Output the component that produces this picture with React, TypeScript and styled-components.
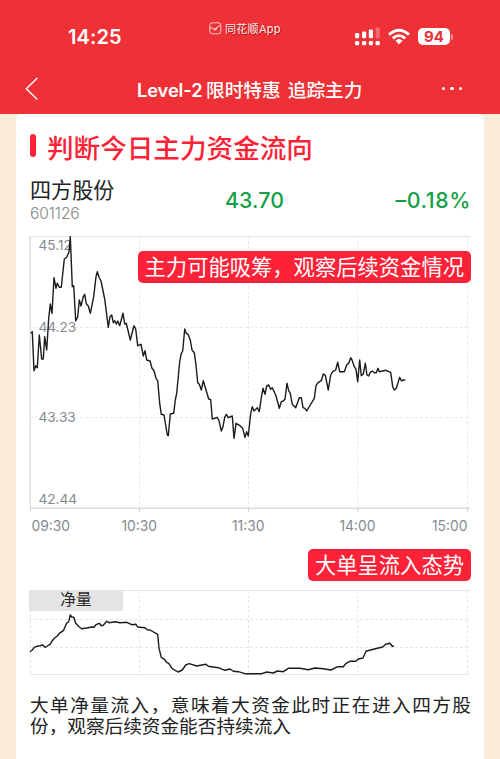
import React from "react";
import styled, { createGlobalStyle } from "styled-components";

const cjk = '"Noto Sans CJK SC", sans-serif';

const GlobalStyle = createGlobalStyle`
  * { box-sizing: border-box; }
  body { margin: 0; background: #fdecdc; font-family: Inter, ${cjk}; }
`;

const Page = styled.div`
  width: 500px;
  height: 759px;
  overflow: hidden;
  display: flex;
  flex-direction: column;
  background: #fdecdc;
`;

const Header = styled.header`
  height: 114px;
  flex: none;
  background: #ee3136;
  color: #fff;
`;

const StatusBar = styled.div`
  height: 63px;
  display: grid;
  grid-template-columns: 209px 1fr 146px;
`;

const Clock = styled.div`
  padding: 25px 0 0 68px;
  font-size: 20px;
  line-height: 25px;
  font-weight: 600;
  letter-spacing: 0.1px;
`;

const Brand = styled.div`
  display: flex;
  gap: 3px;
  padding-top: 21px;
  font-size: 11px;
  line-height: 17px;
  white-space: nowrap;
  color: #ffeceb;
  text-shadow: 1px 1px 1px rgba(110, 0, 0, 0.55);
  svg { margin-top: 1px; flex: none; }
  span { letter-spacing: 0.3px; }
`;

const StatusIcons = styled.div`
  display: flex;
  padding-top: 27px;
`;

const Nav = styled.div`
  height: 51px;
  display: grid;
  grid-template-columns: 137px 1fr 70px;
`;

const Back = styled.div`
  padding: 14px 0 0 25px;
`;

const NavTitle = styled.h1`
  margin: 0;
  padding-top: 13px;
  display: flex;
  align-items: baseline;
  white-space: nowrap;
  font-size: 18.7px;
  line-height: 26px;
  font-weight: 500;
`;

const Latin = styled.span`
  width: 69px;
  font-size: 18.3px;
  font-weight: 600;
  letter-spacing: -0.1px;
`;

const Phrase = styled.span`
  font-family: ${cjk};
  margin-right: 7px;
`;

const More = styled.div`
  display: flex;
  gap: 5px;
  padding: 24px 0 0 12px;
`;

const Dot = styled.i`
  width: 3.4px;
  height: 3.4px;
  border-radius: 50%;
  background: #fff;
`;

const Card = styled.main`
  width: 468px;
  height: 645px;
  margin: 0 auto;
  padding: 0 13px 0 14px;
  background: #fff;
  border-radius: 6px 6px 0 0;
`;

const Heading = styled.div`
  height: 60px;
  display: flex;
  gap: 11px;
  padding-top: 13px;
`;

const Marker = styled.i`
  width: 6px;
  height: 23px;
  margin-top: 7px;
  border-radius: 3px;
  background: #fc2337;
`;

const HeadingText = styled.h2`
  margin: 0;
  font-family: ${cjk};
  font-size: 26.6px;
  line-height: 39px;
  font-weight: 500;
  color: #fc2337;
  white-space: nowrap;
`;

const Quote = styled.section`
  height: 58px;
  display: grid;
  grid-template-columns: 195px 1fr auto;
  color: #14a046;
`;

const StockName = styled.div`
  font-family: ${cjk};
  font-size: 21.1px;
  line-height: 30px;
  color: #222;
`;

const StockCode = styled.div`
  font-size: 15.6px;
  line-height: 20px;
  font-weight: 300;
  letter-spacing: -0.1px;
  color: #888;
`;

const Figure = styled.div<{ $tracking: number }>`
  padding-top: 13px;
  font-size: 21.3px;
  line-height: 27px;
  font-weight: 500;
  letter-spacing: ${(p) => p.$tracking}px;
`;

const ChartBox = styled.section<{ $height: number }>`
  position: relative;
  height: ${(p) => p.$height}px;
  margin: 0 -10px;
  svg { display: block; }
`;

const Callout = styled.div<{ $floating?: boolean }>`
  ${(p) => (p.$floating ? "position: absolute; right: 10px; top: 19px;" : "")}
  width: fit-content;
  height: 32px;
  margin-left: auto;
  padding: 0 7px;
  border-radius: 5px;
  background: #fd2237;
  color: #fff;
  font-family: ${cjk};
  font-size: 21.3px;
  line-height: 29px;
  font-weight: 400;
  white-space: nowrap;
`;

const CalloutRow = styled.div`
  height: 35px;
  padding-top: 1px;
`;

const NetLabel = styled.div`
  position: absolute;
  left: 9px;
  top: 7px;
  width: 94px;
  height: 21px;
  background: #e4e4e4;
  color: #2b2b2b;
  font-family: ${cjk};
  font-size: 15.7px;
  line-height: 18px;
  text-align: center;
`;

const Note = styled.p`
  margin: 0;
  width: 441px;
  font-family: ${cjk};
  font-size: 18.65px;
  line-height: 20.5px;
  text-align: justify;
  color: #222;
`;

type Point = [number, number];

// Traces are stored in thirds of a pixel, relative to the corner of their chart.
const parse = (s: string, dx = 0, dy = 0): Point[] =>
  s.split(" ").map((pair) => {
    const [x, y] = pair.split(",").map(Number);
    return [(x + dx) / 3, (y + dy) / 3];
  });

const price: Point[] = [
  ...parse("32,325 37,320 42,437 47,422 52,428 58,330 65,402 70,402 74,335 80,375 86,280 91,237 96,265 102,158 108,190 112,175 118,187 124,187 133,102 140,97 147,80 151,35 157,185 161,182 167,288 173,275 178,225 183,243 190,215 194,208 199,236 205,243 211,265 221,215 228,155 232,140 238,158 243,168 254,222 265,307 270,275 275,270 280,293 284,287 289,297 293,288 299,302 309,265 314,297 319,295 331,345"),
  ...parse("12,302 17,312 23,362 33,358 40,393 45,377 50,405 60,408 66,430 72,437 78,460 83,467 89,535 94,568 102,570 112,630 115,632 121,567 131,565 136,525 140,505 149,410 154,385 158,378 164,312 169,325 174,328 181,345 186,375 193,383 198,420 203,473 208,478 214,495 220,467 236,522 242,524 247,582 262,577 267,587 274,618 279,605 284,577 289,568 295,578", 330),
  ...parse("7,228 12,295 18,250 30,257 38,265 45,292 50,275 55,288 62,220 67,200 72,213 82,203 88,215 94,173 99,145 105,163 110,138 116,135 122,148 127,143 138,167 148,205 154,185 160,183 165,177 171,130 176,152 181,160 187,193 197,203 208,173 214,173 219,203 225,205 230,213 247,185 253,175 258,137 264,128 274,122 280,102 286,106 295,150 302,105 308,95 317,90 323,67 329,95 343,95 351,73 356,70 362,53 367,62 373,80 378,88 383,125 389,60 394,107 400,102 406,70 411,105 416,108 421,97 427,93 433,98 439,98 444,85 448,95 468,91 482,97 488,140 493,150 499,145 509,112 514,122 526,119", 630, 345),
];

const net: Point[] = [
  ...parse("30,215 37,210 43,202 50,199 60,197 68,195 75,202 82,198 90,193 97,182 103,175 112,168 118,160 130,152 140,130 146,125 151,105 155,111 161,112 167,130 177,140 185,146 200,144 215,141 222,142 228,134 238,130 244,137 250,136 260,124 268,128 285,125 300,128 320,127 335,134 348,133 353,141 375,143 382,149 390,150 413,163 417,205 424,232 433,238 440,247 446,250 457,266 474,276 487,270 497,255 508,251 530,258", 0, -9),
  ...parse("18,253 25,259 55,263 75,271 90,267 100,274 115,275 135,281 185,281 200,276 220,279 232,273 250,275 265,265 300,265 325,269 345,264 370,266 393,270 413,260 430,260 437,251 450,244 467,244 475,237 489,234 498,214 520,208 548,201 557,193 570,190 577,199 582,199", 540, -9),
];

const columns = [10.5, 119.5, 228.5, 338, 447.5];

const Trace = ({ points }: { points: Point[] }) => (
  <polyline
    points={points.map((p) => p.map((n) => n.toFixed(1)).join(",")).join(" ")}
    fill="none"
    stroke="#1b1b1b"
    strokeWidth="1.4"
    strokeLinejoin="round"
  />
);

const PriceChart = () => (
  <svg width="461" height="316" fontFamily="Inter" fontSize="13.6" fill="#848991">
    <g transform="translate(0 -14)">
      <g stroke="#e9e9ea" strokeDasharray="3 2">
        {columns.slice(1).map((x) => <path key={x} d={`M${x} 18V290`} />)}
        <path d="M10 109.5H449M10 199.5H449" />
      </g>
      <path d="M10 18.5H450" stroke="#e4e4e5" />
      <path d="M10.3 18V290" stroke="#dededf" strokeWidth="1.5" />
      <path d="M10 290.2H450" stroke="#dcdcdd" strokeWidth="1.4" />
      {columns.map((x) => <path key={x} d={`M${x} 290V294`} stroke="#d4d4d6" />)}
      <g>
        <text x="18.5" y="32">45.12</text>
        <text x="18.5" y="114">44.23</text>
        <text x="18.5" y="204">43.33</text>
        <text x="18.5" y="286">42.44</text>
      </g>
      <g fontSize="13.8">
        <text x="11.5" y="312.5">09:30</text>
        <text x="101.5" y="312.5">10:30</text>
        <text x="212" y="312.5">11:30</text>
        <text x="319.5" y="312.5">14:00</text>
        <text x="412" y="312.5">15:00</text>
      </g>
    </g>
    <g transform="translate(0 -7)"><Trace points={price} /></g>
  </svg>
);

const NetChart = () => (
  <svg width="461" height="104">
    <g stroke="#e6e6e6" strokeDasharray="3 2">
      {columns.map((x) => <path key={x} d={`M${x} 7V91`} />)}
      <path d="M10 36.5H449M10 64.5H449" />
    </g>
    <path d="M10 7.5H450M10 91.5H450" stroke="#e6e6e6" />
    <Trace points={net} />
  </svg>
);

const BrandMark = () => (
  <svg width="13" height="13" fill="none" stroke="#ffdedc" strokeWidth="0.9">
    <rect x="0.8" y="0.8" width="11" height="11" rx="2.5" />
    <path d="M1 6.5l2-1 2.5 2L8 5l4-1.5" />
    <path d="M4.5 7.5h2L8 6" strokeWidth="1.3" />
  </svg>
);

const Signal = () => (
  <svg width="26" height="19" fill="#fff">
    <rect x="0" y="6" width="4.2" height="5.2" rx="1.2" />
    <rect x="7" y="4.5" width="4.2" height="6.7" rx="1.2" />
    <rect x="13.8" y="2.5" width="4.2" height="8.7" rx="1.2" />
    <rect x="20.6" y="0.5" width="4.2" height="10.7" rx="1.2" opacity="0.28" />
    {[0, 7, 13.8, 20.6].map((x) => <rect key={x} x={x} y="14" width="4.2" height="4.2" rx="1.3" />)}
  </svg>
);

const Wifi = () => (
  <svg width="22" height="19" fill="none" stroke="#fff" strokeWidth="2.8">
    <path d="M1 7.6Q11-1.2 21 7.6" />
    <path d="M4.8 11.4Q11 5.8 17.2 11.4" />
    <path d="M7.4 13.6Q11 10.6 14.6 13.6L11 17.5Z" fill="#fff" stroke="none" />
  </svg>
);

const BatteryShell = styled.div`
  display: flex;
  align-items: center;
  margin-top: 1px;
  height: 17px;
  &::after {
    content: "";
    width: 2px;
    height: 6px;
    margin-left: 1px;
    border-radius: 0 2px 2px 0;
    background: #f69598;
  }
`;

const BatteryLevel = styled.div`
  width: 32px;
  height: 17px;
  border-radius: 5px;
  background: #fff;
  color: #e43338;
  font-size: 15px;
  line-height: 17px;
  font-weight: 700;
  text-align: center;
`;

const SignalSlot = styled.div`
  margin-left: 1px;
  width: 33px;
`;

const WifiSlot = styled.div`
  width: 30px;
`;

export default function App() {
  return (
    <Page>
      <GlobalStyle />
      <Header>
        <StatusBar>
          <Clock>14:25</Clock>
          <Brand><BrandMark /><span>同花顺App</span></Brand>
          <StatusIcons>
            <SignalSlot><Signal /></SignalSlot>
            <WifiSlot><Wifi /></WifiSlot>
            <BatteryShell><BatteryLevel>94</BatteryLevel></BatteryShell>
          </StatusIcons>
        </StatusBar>
        <Nav>
          <Back>
            <svg width="14" height="24" fill="none" stroke="#fff" strokeWidth="1.4">
              <path d="M12.3 1L1.3 11.7L12.3 22.5" />
            </svg>
          </Back>
          <NavTitle><Latin>Level-2</Latin><Phrase>限时特惠</Phrase><Phrase>追踪主力</Phrase></NavTitle>
          <More><Dot /><Dot /><Dot /></More>
        </Nav>
      </Header>
      <Card>
        <Heading><Marker /><HeadingText>判断今日主力资金流向</HeadingText></Heading>
        <Quote>
          <div>
            <StockName>四方股份</StockName>
            <StockCode>601126</StockCode>
          </div>
          <Figure $tracking={0.1}>43.70</Figure>
          <Figure $tracking={0.6}>–0.18%</Figure>
        </Quote>
        <ChartBox $height={316}>
          <PriceChart />
          <Callout $floating>主力可能吸筹，观察后续资金情况</Callout>
        </ChartBox>
        <CalloutRow><Callout>大单呈流入态势</Callout></CalloutRow>
        <ChartBox $height={111}>
          <NetChart />
          <NetLabel>净量</NetLabel>
        </ChartBox>
        <Note>大单净量流入，意味着大资金此时正在进入四方股份，观察后续资金能否持续流入</Note>
      </Card>
    </Page>
  );
}
